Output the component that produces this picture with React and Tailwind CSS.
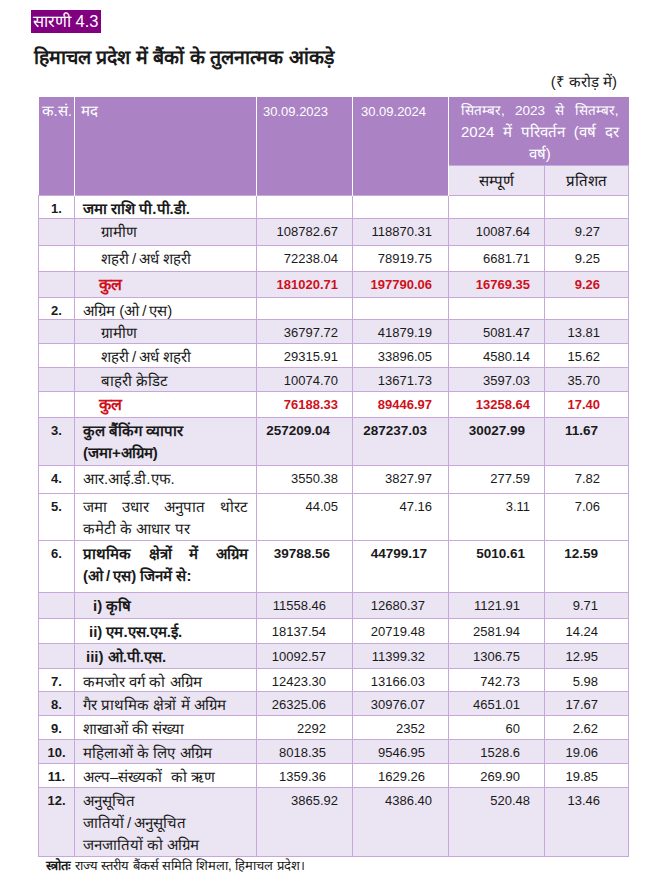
import React from "react";

const PADS = {
  A: ["pr-[14px]", "pr-[16px]", "pr-[14px]", "pr-[28px]"],
  B: ["pr-[22px]", "pr-[21px]", "pr-[19px]", "pr-[30px]"],
  C: ["pr-[26px]", "pr-[23px]", "pr-[24px]", "pr-[30px]"],
};

const S = "\u2009/\u2009";

const rows = [
  { sn: "1.", label: ["जमा राशि पी.पी.डी."], bold: true, h: "h-[23px]", bg: false, vals: ["", "", "", ""], pad: "A" },
  { label: ["ग्रामीण"], indent: "pl-[26px]", h: "h-[27px]", bg: true, vals: ["108782.67", "118870.31", "10087.64", "9.27"], pad: "A" },
  { label: [`शहरी${S}अर्ध शहरी`], indent: "pl-[26px]", h: "h-[26px]", bg: false, vals: ["72238.04", "78919.75", "6681.71", "9.25"], pad: "A" },
  { label: ["कुल"], indent: "pl-[24px]", red: true, h: "h-[26px]", bg: true, vals: ["181020.71", "197790.06", "16769.35", "9.26"], pad: "A" },
  { sn: "2.", label: [`अग्रिम (ओ${S}एस)`], h: "h-[21px]", bg: false, vals: ["", "", "", ""], pad: "A" },
  { label: ["ग्रामीण"], indent: "pl-[26px]", h: "h-[24px]", bg: true, vals: ["36797.72", "41879.19", "5081.47", "13.81"], pad: "A" },
  { label: [`शहरी${S}अर्ध शहरी`], indent: "pl-[26px]", h: "h-[24px]", bg: false, vals: ["29315.91", "33896.05", "4580.14", "15.62"], pad: "A" },
  { label: ["बाहरी क्रेडिट"], indent: "pl-[26px]", h: "h-[24px]", bg: true, vals: ["10074.70", "13671.73", "3597.03", "35.70"], pad: "A" },
  { label: ["कुल"], indent: "pl-[24px]", red: true, h: "h-[26px]", bg: false, vals: ["76188.33", "89446.97", "13258.64", "17.40"], pad: "A" },
  { sn: "3.", label: ["कुल बैंकिंग व्यापार", "(जमा+अग्रिम)"], bold: true, boldVals: true, h: "h-[48px]", bg: true, vals: ["257209.04", "287237.03", "30027.99", "11.67"], pad: "B" },
  { sn: "4.", label: ["आर.आई.डी.एफ."], h: "h-[28px]", bg: false, vals: ["3550.38", "3827.97", "277.59", "7.82"], pad: "A" },
  { sn: "5.", label: ["जमा उधार अनुपात थोरट", "कमेटी के आधार पर"], justify: true, h: "h-[46px]", bg: false, vals: ["44.05", "47.16", "3.11", "7.06"], pad: "A" },
  { sn: "6.", label: ["प्राथमिक क्षेत्रों में अग्रिम", `(ओ${S}एस) जिनमें से:`], bold: true, justify: true, boldVals: true, h: "h-[52px]", bg: false, vals: ["39788.56", "44799.17", "5010.61", "12.59"], pad: "B" },
  { label: ["i) कृषि"], bold: true, indent: "pl-[18px]", h: "h-[26px]", bg: true, vals: ["11558.46", "12680.37", "1121.91", "9.71"], pad: "C" },
  { label: ["ii) एम.एस.एम.ई."], bold: true, indent: "pl-[14px]", h: "h-[25px]", bg: false, vals: ["18137.54", "20719.48", "2581.94", "14.24"], pad: "C" },
  { label: ["iii) ओ.पी.एस."], bold: true, indent: "pl-[11px]", h: "h-[25px]", bg: true, vals: ["10092.57", "11399.32", "1306.75", "12.95"], pad: "C" },
  { sn: "7.", label: ["कमजोर वर्ग को अग्रिम"], h: "h-[23px]", bg: false, vals: ["12423.30", "13166.03", "742.73", "5.98"], pad: "C" },
  { sn: "8.", label: ["गैर प्राथमिक क्षेत्रों में अग्रिम"], h: "h-[24px]", bg: true, vals: ["26325.06", "30976.07", "4651.01", "17.67"], pad: "C" },
  { sn: "9.", label: ["शाखाओं की संख्या"], h: "h-[24px]", bg: false, vals: ["2292", "2352", "60", "2.62"], pad: "C" },
  { sn: "10.", label: ["महिलाओं के लिए अग्रिम"], h: "h-[24px]", bg: true, vals: ["8018.35", "9546.95", "1528.6", "19.06"], pad: "C" },
  { sn: "11.", label: ["अल्प–संख्यकों\u00a0\u00a0को ऋण"], h: "h-[24px]", bg: false, vals: ["1359.36", "1629.26", "269.90", "19.85"], pad: "C" },
  { sn: "12.", label: ["अनुसूचित", `जातियों${S}अनुसूचित`, "जनजातियों को अग्रिम"], h: "h-[69px]", bg: true, vals: ["3865.92", "4386.40", "520.48", "13.46"], pad: "A" },
];

const cellB = "border border-[#c9a7dc] align-top";

export default function App() {
  return (
    <div className="w-[664px] h-[883px] bg-white text-[#1a1a1a] [font-family:'Liberation_Sans',Arial,sans-serif] overflow-hidden">
      <div className="pt-[10px] pl-[31px] h-[33px]">
        <div className="inline-block bg-[#800080] text-white text-[16.5px] leading-[23px] h-[23px] px-[2px]">सारणी 4.3</div>
      </div>
      <div className="pl-[34px] mt-[12px] text-[19.5px] font-bold leading-[25px] h-[25px]">
        हिमाचल प्रदेश में बैंकों के तुलनात्मक आंकड़े
      </div>
      <div className="flex justify-end pr-[47px] mt-[1px] text-[15px] leading-[21px] h-[21px]">(₹ करोड़ में)</div>
      <table className="ml-[38px] mt-[5px] w-[590px] border-collapse table-fixed text-[13px] leading-[17px]">
        <colgroup>
          <col className="w-[36px]" />
          <col className="w-[182px]" />
          <col className="w-[96px]" />
          <col className="w-[96px]" />
          <col className="w-[96px]" />
          <col className="w-[84px]" />
        </colgroup>
        <thead>
          <tr className="h-[68px]">
            <th rowSpan={2} className="bg-[#ab83c5] text-white font-normal text-left align-top pl-[3px] pt-[3px] border-r border-white text-[15px] leading-[22px]">
              <div className="h-[22px]">क.सं.</div>
            </th>
            <th rowSpan={2} className="bg-[#ab83c5] text-white font-normal text-left align-top pl-[6px] pt-[3px] border-r border-white text-[15px] leading-[22px]">
              <div className="h-[22px]">मद</div>
            </th>
            <th rowSpan={2} className="bg-[#ab83c5] text-white font-normal text-left align-top pl-[6px] pt-[6px] border-r border-white">30.09.2023</th>
            <th rowSpan={2} className="bg-[#ab83c5] text-white font-normal text-left align-top pl-[8px] pt-[6px] border-r border-white">30.09.2024</th>
            <th colSpan={2} className="bg-[#ab83c5] text-white font-normal align-top pl-[12px] pr-[10px] pt-[2px] text-[15px] leading-[22px]">
              <div className="text-justify [text-align-last:justify] whitespace-nowrap h-[22px]">
                <span className="text-[13.5px]">सितम्बर, 2023 से सितम्बर,</span>
              </div>
              <div className="flex justify-between h-[22px]">
                <span>2024</span><span>में</span><span>परिवर्तन</span><span>(वर्ष</span><span>दर</span>
              </div>
              <div className="text-center h-[22px]">वर्ष)</div>
            </th>
          </tr>
          <tr className="h-[30px]">
            <th className="bg-[#ebe4f3] font-normal text-[#111] text-center align-middle border border-[#c9a7dc] text-[15px] leading-[20px]">
              <div className="h-[20px]">सम्पूर्ण</div>
            </th>
            <th className="bg-[#ebe4f3] font-normal text-[#111] text-center align-middle border border-[#c9a7dc] text-[15px] leading-[20px]">
              <div className="h-[20px]">प्रतिशत</div>
            </th>
          </tr>
        </thead>
        <tbody>
          {rows.map((r, i) => {
            const bg = r.bg ? "bg-[#ebe4f3]" : "bg-white";
            const pads = PADS[r.pad];
            const valCls = r.red
              ? "text-[#d0101a] font-bold"
              : r.boldVals
              ? "font-bold text-[13.5px]"
              : "";
            const multi = r.label.length > 1;
            const lineH = multi ? "h-[22px] leading-[22px]" : "h-[18px] leading-[20px]";
            return (
              <tr key={i} className={`${r.h} ${bg}`}>
                <td className={`${cellB} text-center font-bold pt-[4px]`}>
                  <div className="h-[17px]">{r.sn || ""}</div>
                </td>
                <td
                  className={`${cellB} ${multi ? "pt-[2px]" : "pt-[3px]"} ${r.indent || "pl-[8px]"} pr-[8px] text-[15px] ${r.bold ? "font-bold" : ""} ${r.red ? "text-[#d0101a] font-bold text-[16px]" : ""}`}
                >
                  {r.label.map((l, k) =>
                    r.justify && k === 0 ? (
                      <div key={k} className={`${lineH} text-justify [text-align-last:justify]`}>{l}</div>
                    ) : (
                      <div key={k} className={`${lineH} whitespace-nowrap`}>{l}</div>
                    )
                  )}
                </td>
                {r.vals.map((v, j) => (
                  <td key={j} className={`${cellB} text-right pt-[4px] ${pads[j]} ${valCls}`}>
                    <div className="h-[17px]">{v}</div>
                  </td>
                ))}
              </tr>
            );
          })}
        </tbody>
      </table>
      <div className="pl-[46px] mt-[0px] text-[13px] leading-[18px] h-[18px]">
        <span className="font-bold">स्त्रोतः</span> राज्य स्तरीय बैंकर्स समिति शिमला, हिमाचल प्रदेश।
      </div>
    </div>
  );
}
